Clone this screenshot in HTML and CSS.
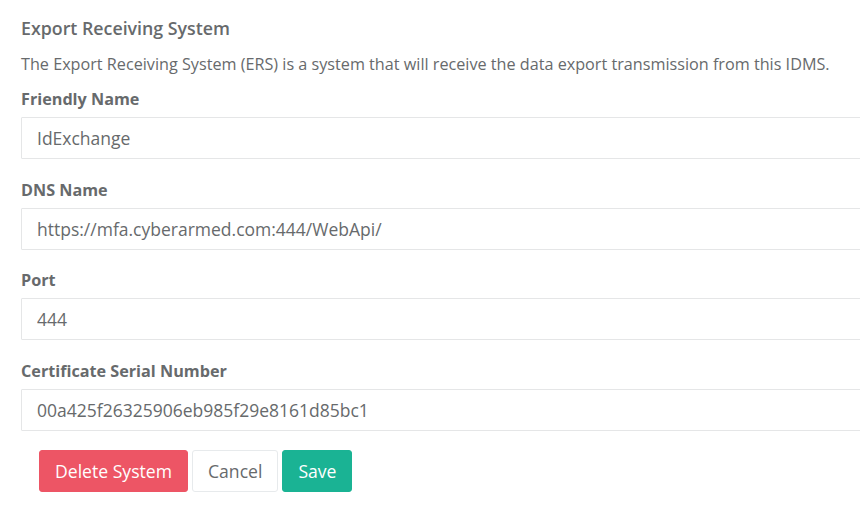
FILE: index.html
```html
<!DOCTYPE html>
<html>
<head>
<meta charset="utf-8">
<link rel="stylesheet" href="styles.css">
</head>
<body>
<div class="page">
  <h3 class="title">Export Receiving System</h3>
  <p class="desc">The Export Receiving System (ERS) is a system that will receive the data export transmission from this IDMS.</p>
  <form class="form">
    <div class="group">
      <label class="label">Friendly Name</label>
      <input class="control" type="text" value="IdExchange">
    </div>
    <div class="group">
      <label class="label">DNS Name</label>
      <input class="control" type="text" value="https://mfa.cyberarmed.com:444/WebApi/">
    </div>
    <div class="group">
      <label class="label">Port</label>
      <input class="control" type="text" value="444">
    </div>
    <div class="group last">
      <label class="label">Certificate Serial Number</label>
      <input class="control" type="text" value="00a425f26325906eb985f29e8161d85bc1">
    </div>
    <div class="actions">
      <button type="button" class="btn btn-danger">Delete System</button>
      <button type="button" class="btn btn-white">Cancel</button>
      <button type="button" class="btn btn-primary">Save</button>
    </div>
  </form>
</div>
</body>
</html>
```

FILE: styles.css
```css
html, body {
  margin: 0;
  padding: 0;
  background: #ffffff;
  overflow: hidden;
}
body {
  font-family: "Open Sans", "Liberation Sans", sans-serif;
  color: #676a6c;
  font-size: 16px;
}
.page {
  padding: 16px 0 0 21px;
  width: 900px;
}
.title {
  margin: 0;
  font-size: 17.8px;
  line-height: 24px;
  font-weight: 600;
  color: #676a6c;
}
.desc {
  margin: 14px 0 0 0;
  font-size: 16.2px;
  line-height: 20px;
}
.form {
  margin-top: 15px;
}
.group {
  display: flex;
  flex-direction: column;
  margin-bottom: 20.7px;
}
.group.last {
  margin-bottom: 19px;
}
.label {
  font-weight: 700;
  font-size: 16.2px;
  line-height: 20px;
  margin-bottom: 8px;
}
.control {
  box-sizing: border-box;
  height: 42px;
  width: 100%;
  border: 1px solid #e5e6e7;
  border-radius: 1px;
  padding: 0 15px;
  font-family: "Open Sans", "Liberation Sans", sans-serif;
  font-size: 17.5px;
  color: #676a6c;
  background: #fff;
  outline: none;
}
.actions {
  display: flex;
  gap: 4px;
  padding-left: 18px;
}
.btn {
  box-sizing: border-box;
  height: 42px;
  padding: 0 15px;
  border: 1px solid transparent;
  border-radius: 3px;
  font-family: "Open Sans", "Liberation Sans", sans-serif;
  font-size: 17.6px;
  line-height: 20px;
  cursor: pointer;
}
.btn-danger {
  background: #ed5565;
  border-color: #ed5565;
  color: #fff;
}
.btn-white {
  background: #fff;
  border-color: #e7eaec;
  color: #676a6c;
}
.btn-primary {
  background: #1ab394;
  border-color: #1ab394;
  color: #fff;
}
```
